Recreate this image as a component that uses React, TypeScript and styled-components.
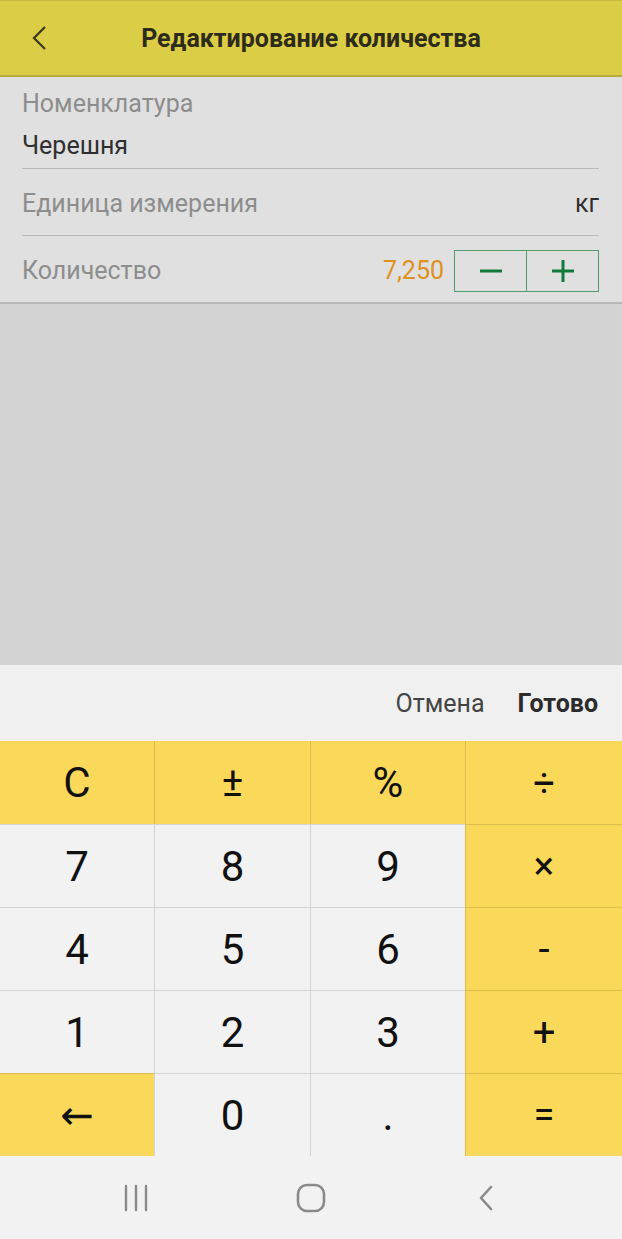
import React from "react";
import styled, { createGlobalStyle } from "styled-components";

const Global = createGlobalStyle`
  html, body { margin: 0; padding: 0; }
  body {
    font-family: Roboto, "Noto Sans", "Liberation Sans", sans-serif;
    background: #f2f2f2;
  }
`;

const Screen = styled.div`
  width: 622px;
  height: 1239px;
  display: flex;
  flex-direction: column;
  overflow: hidden;
`;

const Header = styled.div`
  height: 74px;
  flex-shrink: 0;
  background: #dccd46;
  border-top: 1px solid #c9b83a;
  border-bottom: 2px solid #b9ab3d;
  display: flex;
  align-items: center;
  position: relative;
`;

const BackButton = styled.div`
  width: 78px;
  height: 100%;
  display: flex;
  align-items: center;
  padding-left: 30px;
  box-sizing: border-box;
`;

const Title = styled.div`
  position: absolute;
  left: 0;
  right: 0;
  text-align: center;
  font-size: 25px;
  font-weight: 700;
  color: #2d2b1a;
  pointer-events: none;
`;

const Form = styled.div`
  background: #e0e0e0;
  padding: 0 23px 0 22px;
  border-bottom: 2px solid #b8b8b8;
  height: 225px;
  flex-shrink: 0;
`;

const Field = styled.div<{ $divider?: boolean }>`
  border-bottom: ${(p) => (p.$divider ? "1px solid #b9b9b9" : "none")};
  box-sizing: border-box;
`;

const StackedField = styled(Field)`
  height: 92px;
  padding-top: 12px;
`;

const InlineField = styled(Field)`
  height: 67px;
  padding-top: 3px;
  display: flex;
  align-items: center;
  justify-content: space-between;
`;

const Label = styled.div`
  font-size: 25px;
  color: #8d8d8d;
  line-height: 30px;
`;

const Value = styled.div<{ $accent?: boolean }>`
  font-size: 25px;
  color: ${(p) => (p.$accent ? "#e0901f" : "#2f2f2f")};
  line-height: 30px;
`;

const StackedValue = styled(Value)`
  margin-top: 12px;
`;

const Stepper = styled.div`
  display: flex;
  align-items: center;
  gap: 10px;
`;

const StepGroup = styled.div`
  display: flex;
  border: 1px solid #4f9c6c;
  height: 40px;
`;

const StepButton = styled.div`
  width: 71px;
  display: flex;
  align-items: center;
  justify-content: center;
  & + & {
    border-left: 1px solid #4f9c6c;
  }
`;

const Blank = styled.div`
  flex: 1;
  background: #d3d3d3;
`;

const Toolbar = styled.div`
  height: 76px;
  flex-shrink: 0;
  background: #f0f0f0;
  display: flex;
  align-items: center;
  justify-content: flex-end;
  gap: 33px;
  padding-right: 24px;
  box-sizing: border-box;
`;

const ToolAction = styled.div<{ $bold?: boolean }>`
  font-size: 25px;
  color: ${(p) => (p.$bold ? "#2b2b2b" : "#444")};
  font-weight: ${(p) => (p.$bold ? 700 : 400)};
`;

const Keypad = styled.div`
  display: grid;
  grid-template-columns: 154px 156px 155px 157px;
  grid-auto-rows: 83px;
  flex-shrink: 0;
`;

const Key = styled.div<{ $op?: boolean; $size?: number; $col: number; $row: number }>`
  background: ${(p) => (p.$op ? "#fad85a" : "#f2f2f2")};
  border-left: ${(p) => (p.$col > 0 ? "1px solid rgba(0,0,0,0.12)" : "none")};
  border-top: ${(p) => (p.$row > 0 ? "1px solid rgba(0,0,0,0.12)" : "none")};
  display: flex;
  align-items: center;
  justify-content: center;
  font-size: ${(p) => p.$size ?? 42}px;
  color: #111;
  font-family: Roboto, "DejaVu Sans", sans-serif;
`;

const NavBar = styled.div`
  height: 83px;
  flex-shrink: 0;
  background: #f2f2f2;
  display: grid;
  grid-template-columns: 1fr 1fr 1fr;
  align-items: center;
  justify-items: center;
  padding: 0 49px;
`;

const keys: { label: string; op?: boolean; size?: number }[] = [
  { label: "C", op: true },
  { label: "±", op: true, size: 40 },
  { label: "%", op: true },
  { label: "÷", op: true, size: 38 },
  { label: "7" },
  { label: "8" },
  { label: "9" },
  { label: "×", op: true, size: 38 },
  { label: "4" },
  { label: "5" },
  { label: "6" },
  { label: "-", op: true, size: 40 },
  { label: "1" },
  { label: "2" },
  { label: "3" },
  { label: "+", op: true, size: 40 },
  { label: "←", op: true, size: 40 },
  { label: "0" },
  { label: "." },
  { label: "=", op: true, size: 38 },
];

export default function App() {
  return (
    <Screen>
      <Global />
      <Header>
        <BackButton>
          <svg width="18" height="28" viewBox="0 0 18 28">
            <path d="M15 3 L4 14 L15 25" fill="none" stroke="#3a3720" strokeWidth="2.2" />
          </svg>
        </BackButton>
        <Title>Редактирование количества</Title>
      </Header>
      <Form>
        <StackedField $divider>
          <Label>Номенклатура</Label>
          <StackedValue>Черешня</StackedValue>
        </StackedField>
        <InlineField $divider>
          <Label>Единица измерения</Label>
          <Value>кг</Value>
        </InlineField>
        <InlineField>
          <Label>Количество</Label>
          <Stepper>
            <Value $accent>7,250</Value>
            <StepGroup>
              <StepButton>
                <svg width="22" height="22" viewBox="0 0 22 22">
                  <path d="M0 11 H22" stroke="#137a3c" strokeWidth="3" />
                </svg>
              </StepButton>
              <StepButton>
                <svg width="22" height="22" viewBox="0 0 22 22">
                  <path d="M0 11 H22 M11 0 V22" stroke="#137a3c" strokeWidth="3" />
                </svg>
              </StepButton>
            </StepGroup>
          </Stepper>
        </InlineField>
      </Form>
      <Blank />
      <Toolbar>
        <ToolAction>Отмена</ToolAction>
        <ToolAction $bold>Готово</ToolAction>
      </Toolbar>
      <Keypad>
        {keys.map((k, i) => (
          <Key key={k.label} $op={k.op} $size={k.size} $col={i % 4} $row={Math.floor(i / 4)}>
            {k.label}
          </Key>
        ))}
      </Keypad>
      <NavBar>
        <svg width="30" height="30" viewBox="0 0 30 30">
          <path d="M5 3 V27 M15 3 V27 M25 3 V27" stroke="#8a8a8a" strokeWidth="2.4" strokeLinecap="round" />
        </svg>
        <svg width="30" height="30" viewBox="0 0 30 30">
          <rect x="2" y="2" width="26" height="26" rx="9" fill="none" stroke="#8a8a8a" strokeWidth="2.6" />
        </svg>
        <svg width="20" height="30" viewBox="0 0 20 30">
          <path d="M15 4 L5 15 L15 26" fill="none" stroke="#8a8a8a" strokeWidth="2.6" strokeLinecap="round" strokeLinejoin="round" />
        </svg>
      </NavBar>
    </Screen>
  );
}
